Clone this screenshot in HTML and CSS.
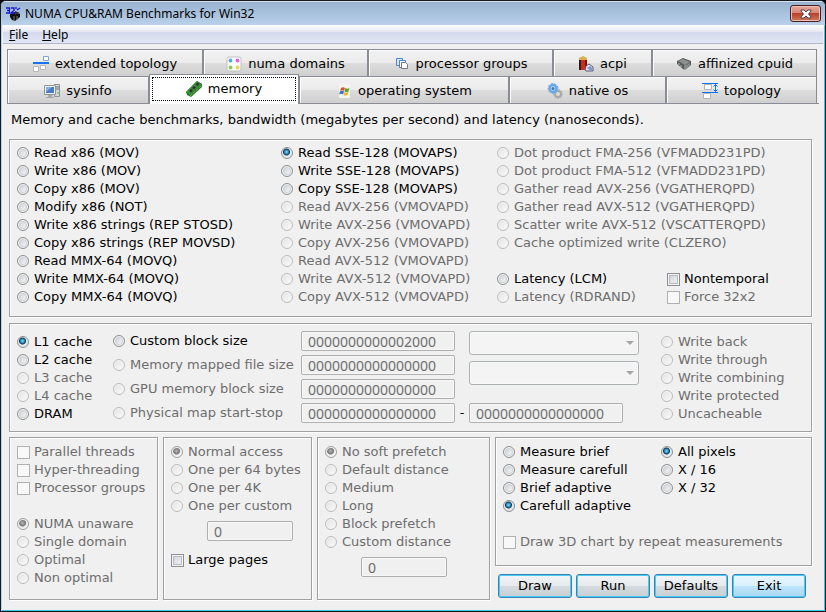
FILE: index.html
```html
<!DOCTYPE html>
<html lang="en">
<head>
<meta charset="utf-8">
<title>NUMA CPU&amp;RAM Benchmarks for Win32</title>
<link rel="stylesheet" href="styles.css">
</head>
<body>
<div class="window">
  <header class="titlebar">
    <svg class="icon" viewBox="0 0 16 16" aria-hidden="true">
      <path d="M5 8l5-2 5 2v3l-5 4-3-1-2-3z" fill="#101014"/><path d="M10 5l5 2-5 2z" fill="#303038"/><path d="M9 10v5M12 10v4" stroke="#777" />
      <path d="M1 2h3.500v2.500H2M4.500 4.500V7H1M6 2h3v2.500L6 7h4M11 1v2M12 4l3-2" fill="none" stroke="#1818d0" stroke-width="1.300"/>
    </svg>
    <span class="title">NUMA CPU&amp;RAM Benchmarks for Win32</span>
    <button class="close" type="button" aria-label="Close">
      <svg viewBox="0 0 12 10" aria-hidden="true"><path d="M1 1h3l2 2 2-2h3v1L8.500 5 11 8v1H8L6 7 4 9H1V8l2.500-3L1 2z" fill="#fff" stroke="#54434b" stroke-width="1"/></svg>
    </button>
  </header>
  <nav class="menu">
    <a href="#file"><u>F</u>ile</a>
    <a href="#help"><u>H</u>elp</a>
  </nav>
  <main>
    <div class="tabs" role="tablist">
      <div class="tabrow upper">
        <button class="tab" type="button" role="tab">
          <svg class="icon" viewBox="0 0 16 16" aria-hidden="true"><path d="M0 7h16" stroke="#1673f0" stroke-width="2"/><path d="M10.500.5h5v4h-5z" fill="#fff" stroke="#7fa3d4"/><path d="M.5 10.500h5v5h-5zM7.500 9.500h5v4h-5z" fill="#fff" stroke="#b8b8b8"/></svg>
          extended topology</button>
        <button class="tab" type="button" role="tab">
          <svg class="icon" viewBox="0 0 16 16" aria-hidden="true"><rect x="1" y="1" width="14" height="14" rx="2" fill="#fff" stroke="#c0c0c0"/><circle cx="4.500" cy="4.500" r="1.900" fill="#55a9dc"/><circle cx="11.500" cy="4.500" r="1.900" fill="#d968d8"/><circle cx="4.500" cy="11.500" r="1.900" fill="#8cd050"/><circle cx="11.500" cy="11.500" r="1.900" fill="#e6d65a"/></svg>
          numa domains</button>
        <button class="tab" type="button" role="tab">
          <svg class="icon" viewBox="0 0 16 16" aria-hidden="true"><path d="M2.500 2.500h6v7h-6z" fill="#dbe8fa" stroke="#4b83d2"/><path d="M5.500 4.500h6v7h-6z" fill="#fff" stroke="#4b83d2"/><path d="M7.500 6.500h4l2 2v4h-6z" fill="#fff" stroke="#777"/></svg>
          processor groups</button>
        <button class="tab" type="button" role="tab">
          <svg class="icon" viewBox="0 0 16 16" aria-hidden="true"><path d="M1 2h3v12H1z" fill="#222"/><path d="M3 2h4v12H3z" fill="#d32a1c"/><path d="M7 2h2v12H7z" fill="#741210"/><path d="M1 2l4-2 4 2v2H1z" fill="#d8b04c"/><path d="M7 14l1-4 3-2 4 3v4H8z" fill="#e1e6f1" stroke="#555b73"/><path d="M9 12l3-2 3 3-2 2z" fill="#8193cb"/></svg>
          acpi</button>
        <button class="tab" type="button" role="tab">
          <svg class="icon" viewBox="0 0 16 16" aria-hidden="true"><path d="M1 5l6-3 8 3v4l-6 5-2-1-6-5z" fill="#555b59"/><path d="M2 5l5-2 7 3-5 3z" fill="#8c918e"/><path d="M9 9v5M11 8.500v4M13 7.500v3M3 7v2M5 9v2" stroke="#b9bcb8"/></svg>
          affinized cpuid</button>
      </div>
      <div class="tabrow lower">
        <button class="tab" type="button" role="tab">
          <svg class="icon" viewBox="0 0 16 16" aria-hidden="true"><path d="M10.500 1.500h5v12h-5z" fill="#d5d8d9" stroke="#8d9494"/><path d="M12 4h3M12 6h3" stroke="#777"/><path d="M14 9v2" stroke="#4fae45"/><path d="M.5 2.500h11v9H.5z" fill="#eef1f2" stroke="#8e9698"/><path d="M2 4h8v6H2z" fill="#4a7cc4"/><path d="M2 4h6L2 9z" fill="#86afe4"/><path d="M4 12h4v2h2v1H2v-1h2z" fill="#a4aaac"/></svg>
          sysinfo</button>
        <button class="tab selected" type="button" role="tab" aria-selected="true">
          <svg class="icon" viewBox="0 0 16 16" aria-hidden="true"><path d="M0 11L11 0l5 3v3L5 16l-4-2z" fill="#1d7a2e"/><path d="M0 11L11 0l5 3L4 14z" fill="#398d3b"/><path d="M3 10l2-2 2 1.500-2 2zM6 7l2-2 2 1.500-2 2zM9.500 3.500l2-2 2 1.500-2 2z" fill="#2b332c"/><path d="M4 15L16 4" stroke="#d0b64e" stroke-dasharray="1 1"/></svg>
          memory</button>
        <button class="tab" type="button" role="tab">
          <svg class="icon" viewBox="0 0 16 16" aria-hidden="true"><path d="M3 1h11v14H3z" fill="#f4f4f0"/><path d="M5 5q2-1.500 4 0L8 8Q6 6.500 4 8z" fill="#e3512c"/><path d="M9.500 5q2 1.500 4 0l-1 3.500q-2 1.500-4 0z" fill="#57a634"/><path d="M4 8.500q2-1.500 4 0l-1 3q-2-1.500-4 0z" fill="#366fc7"/><path d="M8.500 9q2 1.500 4 0l-1 3q-2 1.500-4 0z" fill="#f1bb22"/></svg>
          operating system</button>
        <button class="tab" type="button" role="tab">
          <svg class="icon" viewBox="0 0 16 16" aria-hidden="true"><circle cx="11" cy="11" r="3" fill="#ddd" stroke="#a9a9a5" stroke-width="2"/><circle cx="11" cy="11" r="4.400" fill="none" stroke="#a9a9a5" stroke-dasharray="1.500 1.500"/><circle cx="6" cy="5.500" r="3.500" fill="#cfe5fb" stroke="#69a8e8" stroke-width="2.500"/><circle cx="6" cy="5.500" r="5" fill="none" stroke="#69a8e8" stroke-dasharray="2 1.500"/><circle cx="6" cy="5.500" r="1.500" fill="#3a76bd"/></svg>
          native os</button>
        <button class="tab" type="button" role="tab">
          <svg class="icon" viewBox="0 0 16 16" aria-hidden="true"><path d="M2.500 1.500h7v5h-7zM1.500 10.500h7v5h-7z" fill="#fff" stroke="#b5b5b5"/><path d="M0 .5h16M0 9.500h16" stroke="#1673f0"/><path d="M13.500 1v8M11.500 3.500l2-2 2 2M11.500 6.500l2 2 2-2" stroke="#1673f0" fill="none"/></svg>
          topology</button>
      </div>
    </div>
    <p class="intro">Memory and cache benchmarks, bandwidth (megabytes per second) and latency (nanoseconds).</p>

    <section class="group methods">
      <div class="list">
        <label><input type="radio" name="method">Read x86 (MOV)</label>
        <label><input type="radio" name="method">Write x86 (MOV)</label>
        <label><input type="radio" name="method">Copy x86 (MOV)</label>
        <label><input type="radio" name="method">Modify x86 (NOT)</label>
        <label><input type="radio" name="method">Write x86 strings (REP STOSD)</label>
        <label><input type="radio" name="method">Copy x86 strings (REP MOVSD)</label>
        <label><input type="radio" name="method">Read MMX-64 (MOVQ)</label>
        <label><input type="radio" name="method">Write MMX-64 (MOVQ)</label>
        <label><input type="radio" name="method">Copy MMX-64 (MOVQ)</label>
      </div>
      <div class="list">
        <label><input type="radio" name="method" checked>Read SSE-128 (MOVAPS)</label>
        <label><input type="radio" name="method">Write SSE-128 (MOVAPS)</label>
        <label><input type="radio" name="method">Copy SSE-128 (MOVAPS)</label>
        <label><input type="radio" name="method" disabled>Read AVX-256 (VMOVAPD)</label>
        <label><input type="radio" name="method" disabled>Write AVX-256 (VMOVAPD)</label>
        <label><input type="radio" name="method" disabled>Copy AVX-256 (VMOVAPD)</label>
        <label><input type="radio" name="method" disabled>Read AVX-512 (VMOVAPD)</label>
        <label><input type="radio" name="method" disabled>Write AVX-512 (VMOVAPD)</label>
        <label><input type="radio" name="method" disabled>Copy AVX-512 (VMOVAPD)</label>
      </div>
      <div class="list">
        <label><input type="radio" name="method" disabled>Dot product FMA-256 (VFMADD231PD)</label>
        <label><input type="radio" name="method" disabled>Dot product FMA-512 (VFMADD231PD)</label>
        <label><input type="radio" name="method" disabled>Gather read AVX-256 (VGATHERQPD)</label>
        <label><input type="radio" name="method" disabled>Gather read AVX-512 (VGATHERQPD)</label>
        <label><input type="radio" name="method" disabled>Scatter write AVX-512 (VSCATTERQPD)</label>
        <label><input type="radio" name="method" disabled>Cache optimized write (CLZERO)</label>
        <div class="pair spaced">
          <label><input type="radio" name="method">Latency (LCM)</label>
          <label><input type="checkbox">Nontemporal</label>
          <label><input type="radio" name="method" disabled>Latency (RDRAND)</label>
          <label><input type="checkbox" disabled>Force 32x2</label>
        </div>
      </div>
    </section>

    <section class="group target">
      <div class="list">
        <label><input type="radio" name="level" checked>L1 cache</label>
        <label><input type="radio" name="level">L2 cache</label>
        <label><input type="radio" name="level" disabled>L3 cache</label>
        <label><input type="radio" name="level" disabled>L4 cache</label>
        <label><input type="radio" name="level">DRAM</label>
      </div>
      <div class="blocks">
        <label><input type="radio" name="level">Custom block size</label>
        <input type="text" aria-label="Custom block size" value="0000000000002000" disabled><span></span>
        <label><input type="radio" name="level" disabled>Memory mapped file size</label>
        <input type="text" aria-label="Memory mapped file size" value="0000000000000000" disabled><span></span>
        <label><input type="radio" name="level" disabled>GPU memory block size</label>
        <input type="text" aria-label="GPU memory block size" value="0000000000000000" disabled><span></span>
        <label><input type="radio" name="level" disabled>Physical map start-stop</label>
        <input type="text" aria-label="Physical map start" value="0000000000000000" disabled><span class="dash">-</span>
      </div>
      <div class="sources">
        <div class="combo"><select aria-label="Mapped file" disabled><option></option></select></div>
        <div class="combo"><select aria-label="GPU" disabled><option></option></select></div>
        <input type="text" aria-label="Physical map stop" value="0000000000000000" disabled>
      </div>
      <div class="list">
        <label><input type="radio" name="policy" disabled>Write back</label>
        <label><input type="radio" name="policy" disabled>Write through</label>
        <label><input type="radio" name="policy" disabled>Write combining</label>
        <label><input type="radio" name="policy" disabled>Write protected</label>
        <label><input type="radio" name="policy" disabled>Uncacheable</label>
      </div>
    </section>

    <div class="options">
      <section class="group list">
        <label><input type="checkbox" disabled>Parallel threads</label>
        <label><input type="checkbox" disabled>Hyper-threading</label>
        <label><input type="checkbox" disabled>Processor groups</label>
        <label class="spaced"><input type="radio" name="numa" checked disabled>NUMA unaware</label>
        <label><input type="radio" name="numa" disabled>Single domain</label>
        <label><input type="radio" name="numa" disabled>Optimal</label>
        <label><input type="radio" name="numa" disabled>Non optimal</label>
      </section>
      <section class="group list">
        <label><input type="radio" name="access" checked disabled>Normal access</label>
        <label><input type="radio" name="access" disabled>One per 64 bytes</label>
        <label><input type="radio" name="access" disabled>One per 4K</label>
        <label><input type="radio" name="access" disabled>One per custom</label>
        <input class="short" type="text" aria-label="Custom access step" value="0" disabled>
        <label><input type="checkbox">Large pages</label>
      </section>
      <section class="group list">
        <label><input type="radio" name="prefetch" checked disabled>No soft prefetch</label>
        <label><input type="radio" name="prefetch" disabled>Default distance</label>
        <label><input type="radio" name="prefetch" disabled>Medium</label>
        <label><input type="radio" name="prefetch" disabled>Long</label>
        <label><input type="radio" name="prefetch" disabled>Block prefetch</label>
        <label><input type="radio" name="prefetch" disabled>Custom distance</label>
        <input class="short" type="text" aria-label="Custom prefetch distance" value="0" disabled>
      </section>
      <div class="run">
        <section class="group list">
          <div class="pair">
            <label><input type="radio" name="measure">Measure brief</label>
            <label><input type="radio" name="pixels" checked>All pixels</label>
            <label><input type="radio" name="measure">Measure carefull</label>
            <label><input type="radio" name="pixels">X / 16</label>
            <label><input type="radio" name="measure">Brief adaptive</label>
            <label><input type="radio" name="pixels">X / 32</label>
            <label><input type="radio" name="measure" checked>Carefull adaptive</label>
          </div>
          <label class="spaced"><input type="checkbox" disabled>Draw 3D chart by repeat measurements</label>
        </section>
        <div class="actions">
          <button type="button">Draw</button>
          <button type="button">Run</button>
          <button type="button">Defaults</button>
          <button type="button" class="hot">Exit</button>
        </div>
      </div>
    </div>
  </main>
</div>
</body>
</html>
```
FILE: styles.css
```css
* { box-sizing: border-box; }

html { background: #000; }

body {
  margin: 0;
  font-family: Verdana, "DejaVu Sans", sans-serif;
  font-size: 13px;
  line-height: 18px;
  color: #000;
}

.window {
  display: flex;
  flex-direction: column;
  min-height: 100vh;
  background: #f0f0f0;
  border: 1px solid #16181c;
  border-radius: 6px 6px 0 0;
  box-shadow: inset 1px 0 #b9d1ea, inset -1px -1px #35c8ee;
  overflow: hidden;
}

.icon { width: 16px; height: 16px; flex: none; }

.titlebar {
  display: flex;
  align-items: center;
  gap: 4px;
  height: 24px;
  padding: 0 4px;
  background: linear-gradient(#98b2d0, #b9d1ea);
  border-top: 1px solid #d6e4f2;
}

.title, .menu { font-family: "Segoe UI", "Noto Sans", sans-serif; font-size: 12px; }
.title { flex: 1; }

.close {
  display: grid;
  place-items: center;
  width: 31px;
  height: 17px;
  padding: 0;
  border: 1px solid #4b1d22;
  border-radius: 3px;
  background: linear-gradient(#e6a898, #d88878 45%, #b8402c 50%, #cf7a5c);
  box-shadow: inset 0 0 0 1px #ecc0b4;
}
.close svg { width: 12px; height: 10px; }

.menu {
  display: flex;
  gap: 14px;
  height: 19px;
  margin: 0 2px;
  padding: 1px 6px 0;
  background: linear-gradient(#fff, #e6eaf5 35%, #d4daed 40%, #e1e6f6);
  border-bottom: 1px solid #b2b9cc;
}
.menu a { color: #000; text-decoration: none; }

main {
  flex: 1;
  display: flex;
  flex-direction: column;
  padding: 5px 13px 11px 8px;
}

.tabs { margin: 0 -7px 0 -2px; }
.tabrow { display: grid; height: 27px; padding-right: 2px; }
.upper { grid-template-columns: 196fr 165fr 185fr 99fr 165fr; }
.lower {
  grid-template-columns: 142fr 150fr 210fr 157fr 151fr;
  height: 28px;
  border-bottom: 1px solid #898c95;
}

.tab {
  display: flex;
  align-items: center;
  justify-content: center;
  gap: 6px;
  min-width: 0;
  padding: 2px 0 0;
  border: 1px solid #898c95;
  border-bottom: 0;
  background: linear-gradient(#f2f2f2, #ebebeb 50%, #dddddd 50%, #cfcfcf);
  box-shadow: inset 1px 1px #fcfcfc;
  font: inherit;
  color: inherit;
  white-space: nowrap;
}
.tab.selected {
  margin: -2px 0 -1px;
  padding: 0 0 2px;
  background: #fff;
  outline: 1px dotted #000;
  outline-offset: -4px;
}

.intro { margin: 7px 0 10px 2px; white-space: nowrap; }

.group {
  border: 1px solid #a0a0a0;
  box-shadow: 1px 1px #fff, inset 1px 1px #fff;
  padding: 5px 7px;
}

.list label, .blocks label {
  display: flex;
  align-items: center;
  gap: 4px;
  height: 18px;
  white-space: nowrap;
}
label:has(:disabled) { color: #6d6d6d; }
.spaced { margin-top: 18px; }

.pair { display: grid; grid-template-columns: minmax(0, 170fr) minmax(0, 144fr); }
.run .pair { grid-template-columns: minmax(0, 158fr) minmax(0, 143fr); }

.methods {
  display: grid;
  grid-template-columns: minmax(0, 264fr) minmax(0, 216fr) minmax(0, 314fr);
  padding: 4px 0 10px 7px;
}

.target {
  display: grid;
  grid-template-columns: minmax(0, 96fr) minmax(0, 356fr) minmax(0, 192fr) minmax(0, 150fr);
  margin-top: 6px;
  padding: 7px 0 8px 7px;
}
.target .list { padding-top: 2px; }
.blocks {
  display: grid;
  grid-template-columns: minmax(0, 188fr) minmax(0, 154fr) 14px;
  align-items: center;
  row-gap: 4px;
}
.dash { text-align: center; }
.sources { display: flex; flex-direction: column; justify-content: space-between; }
.sources input { width: 80%; }

input[type="text"] {
  min-width: 0;
  height: 20px;
  padding: 0 6px;
  border: 1px solid #afafaf;
  border-radius: 2px;
  background: #f0f0f0;
  box-shadow: inset 0 0 0 1px #f8f8f8;
  font-family: "Noto Sans", sans-serif;
  font-size: 14px;
  color: #6d6d6d;
}
.short { width: 86px; margin: 6px 0 10px 36px; }

.combo { display: grid; width: 170px; max-width: 100%; }
.combo + .combo { margin-bottom: 12px; }
.combo select {
  grid-area: 1 / 1;
  appearance: none;
  height: 24px;
  border: 1px solid #adb2b5;
  border-radius: 3px;
  background: #f4f4f4;
  box-shadow: inset 0 0 0 1px #f9f9f9;
  opacity: 1;
}
.combo::after {
  content: "";
  grid-area: 1 / 1;
  place-self: center end;
  margin-right: 5px;
  border: 4px solid transparent;
  border-top-color: #a5a5a5;
  border-bottom: 0;
  z-index: 1;
}

input[type="radio"], input[type="checkbox"] {
  appearance: none;
  flex: none;
  width: 13px;
  height: 13px;
  margin: 0;
  border: 1px solid #8e8f8f;
}
input[type="radio"] {
  width: 12px;
  height: 12px;
  margin-right: 1px;
  border-radius: 50%;
  background: linear-gradient(135deg, #c4c9d0, #f4f4f4 80%);
  box-shadow: inset 0 0 0 1px #f6f6f6, inset 0 0 0 2px #d0d3d6;
}
input[type="radio"]:checked {
  background: radial-gradient(circle at 45% 40%, #8fe0fb 0, #2387b8 2px, #123a58 3px, #e4e8eb 4px);
  box-shadow: none;
}
input[type="radio"]:disabled {
  border-color: #bcbcbc;
  background: linear-gradient(135deg, #e2e2e2, #f6f6f6 80%);
  box-shadow: inset 0 0 0 1px #f4f4f4;
}
input[type="radio"]:checked:disabled {
  border-color: #a0a0a0;
  background: radial-gradient(circle at 45% 40%, #b8b8b8 0, #8c8c8c 2px, #777 3px, #ececec 4px);
}
input[type="checkbox"] {
  background: linear-gradient(135deg, #cbcfd5, #f6f6f6);
  box-shadow: inset 0 0 0 1px #f4f4f4, inset 0 0 0 2px #b8bcc2;
}
input[type="checkbox"]:disabled {
  border-color: #b1b1b1;
  background: #f8f8f8;
  box-shadow: none;
}

.options {
  flex: 1;
  display: grid;
  grid-template-columns: minmax(0, 149fr) minmax(0, 149fr) minmax(0, 173fr) minmax(0, 317fr);
  gap: 5px;
  margin-top: 5px;
}
.run { display: flex; flex-direction: column; }
.run .group { flex: 1; }

.actions {
  display: grid;
  grid-template-columns: repeat(4, 1fr);
  gap: 4px;
  padding: 8px 6px 2px 3px;
}
.actions button {
  height: 24px;
  padding: 0;
  border: 1px solid #3c7fb1;
  border-radius: 3px;
  background: linear-gradient(#f2f4f6, #e6eaed 50%, #d4dade 50%, #c9d0d5);
  box-shadow: inset 0 0 0 1px #45cdf5;
  font: inherit;
  color: inherit;
}
.actions .hot { background: linear-gradient(#eaf6fd, #d9f0fc 50%, #bee6fd 50%, #a9d7f1); }
```
